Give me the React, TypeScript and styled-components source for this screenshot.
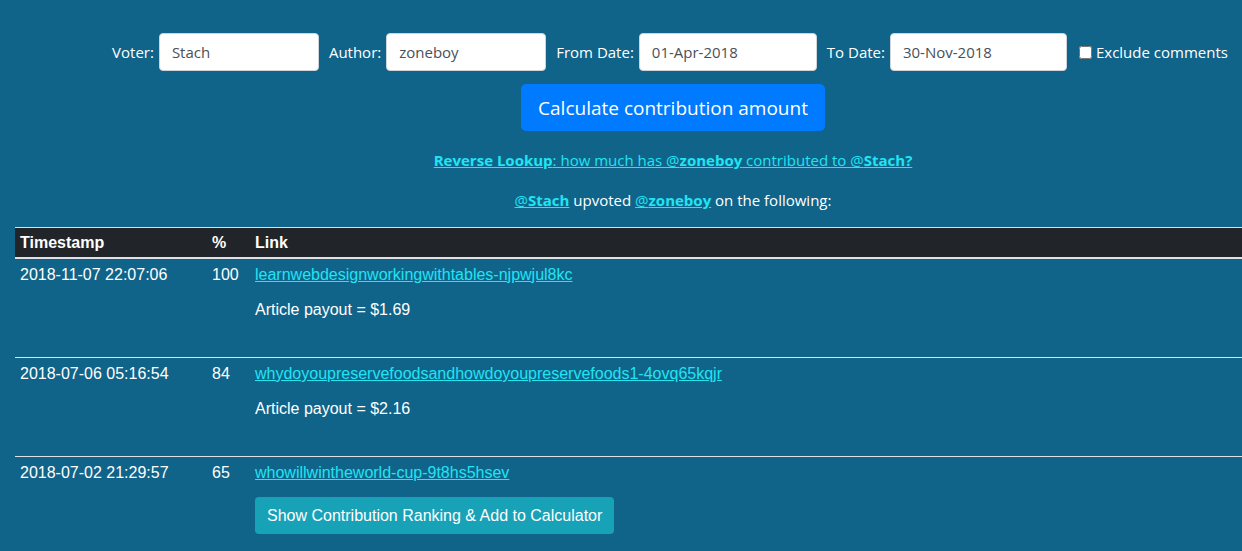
import React from "react";
import styled, { createGlobalStyle } from "styled-components";

const GlobalStyle = createGlobalStyle`
  body {
    margin: 0;
    background-color: #106389;
    color: #ffffff;
    font-family: "Open Sans", "Liberation Sans", sans-serif;
    overflow: hidden;
  }
`;

const Page = styled.div`
  width: 1242px;
  height: 551px;
`;

const Top = styled.div`
  padding-left: 104px;
  display: flex;
  flex-direction: column;
  align-items: center;
`;

const Form = styled.form`
  display: flex;
  align-items: center;
  padding-top: 33px;
  margin-right: 6px;
  font-size: 15px;
`;

const Label = styled.label`
  margin-right: 5px;
`;

const Input = styled.input<{ $w: number }>`
  width: ${(p) => p.$w}px;
  height: 38px;
  box-sizing: border-box;
  border: 1px solid #ced4da;
  border-radius: 4px;
  padding: 0 12px;
  margin-right: 10px;
  font-family: "Open Sans", sans-serif;
  font-size: 15px;
  color: #495057;
  background: #fff;
`;

const Check = styled.input`
  width: 13px;
  height: 13px;
  margin: 0 4px 0 2px;
`;

const CalcButton = styled.button`
  margin-top: 13px;
  height: 47px;
  padding: 0 17px;
  border: none;
  border-radius: 5px;
  background: #007bff;
  color: #fff;
  font-family: "Open Sans", sans-serif;
  font-size: 19px;
`;

const Lead = styled.p<{ $mt: number }>`
  margin: ${(p) => p.$mt}px 0 0;
  font-size: 15px;
  line-height: 22px;
  text-align: center;
`;

const Link = styled.a`
  color: #22e4f2;
  text-decoration: underline;
  b {
    font-weight: 700;
  }
`;

const Table = styled.table`
  margin: 16px 0 0 15px;
  width: 1227px;
  border-collapse: collapse;
  font-family: "Liberation Sans", Arial, sans-serif;
  font-size: 16px;
`;

const Head = styled.thead`
  background: #212529;
  th {
    text-align: left;
    font-weight: 700;
    height: 29px;
    padding: 0 5px;
    border-top: 1px solid #dee2e6;
    border-bottom: 2px solid #dee2e6;
  }
`;

const Row = styled.tr<{ $first?: boolean }>`
  td {
    vertical-align: top;
    padding: 4px 5px 0;
    line-height: 24px;
    border-top: ${(p) => (p.$first ? "none" : "1px solid #dee2e6")};
  }
`;

const Payout = styled.div`
  margin: 11px 0 35px;
`;

const InfoButton = styled.button`
  margin-top: 12px;
  padding: 6px 12px;
  border: none;
  border-radius: 4px;
  background: #17a2b8;
  color: #fff;
  font-family: "Liberation Sans", Arial, sans-serif;
  font-size: 16px;
  line-height: 25px;
`;

const rows = [
  { ts: "2018-11-07 22:07:06", pct: "100", link: "learnwebdesignworkingwithtables-njpwjul8kc", payout: "$1.69" },
  { ts: "2018-07-06 05:16:54", pct: "84", link: "whydoyoupreservefoodsandhowdoyoupreservefoods1-4ovq65kqjr", payout: "$2.16" },
  { ts: "2018-07-02 21:29:57", pct: "65", link: "whowillwintheworld-cup-9t8hs5hsev" },
];

export default function App() {
  return (
    <Page>
      <GlobalStyle />
      <Top>
        <Form>
          <Label>Voter:</Label>
          <Input $w={160} defaultValue="Stach" />
          <Label>Author:</Label>
          <Input $w={160} defaultValue="zoneboy" />
          <Label>From Date:</Label>
          <Input $w={178} defaultValue="01-Apr-2018" />
          <Label>To Date:</Label>
          <Input $w={177} defaultValue="30-Nov-2018" />
          <Check type="checkbox" />
          <span>Exclude comments</span>
        </Form>
        <CalcButton type="button">Calculate contribution amount</CalcButton>
        <Lead $mt={18}>
          <Link href="#">
            <b>Reverse Lookup</b>: how much has @<b>zoneboy</b> contributed to @<b>Stach?</b>
          </Link>
        </Lead>
        <Lead $mt={18}>
          <Link href="#">
            @<b>Stach</b>
          </Link>{" "}
          upvoted{" "}
          <Link href="#">
            @<b>zoneboy</b>
          </Link>{" "}
          on the following:
        </Lead>
      </Top>
      <Table>
        <colgroup>
          <col style={{ width: 192 }} />
          <col style={{ width: 43 }} />
          <col />
        </colgroup>
        <Head>
          <tr>
            <th>Timestamp</th>
            <th>%</th>
            <th>Link</th>
          </tr>
        </Head>
        <tbody>
          {rows.map((r, i) => (
            <Row key={r.ts} $first={i === 0}>
              <td>{r.ts}</td>
              <td>{r.pct}</td>
              <td>
                <Link href="#">{r.link}</Link>
                {r.payout ? (
                  <Payout>Article payout = {r.payout}</Payout>
                ) : (
                  <div>
                    <InfoButton type="button">Show Contribution Ranking &amp; Add to Calculator</InfoButton>
                  </div>
                )}
              </td>
            </Row>
          ))}
        </tbody>
      </Table>
    </Page>
  );
}
